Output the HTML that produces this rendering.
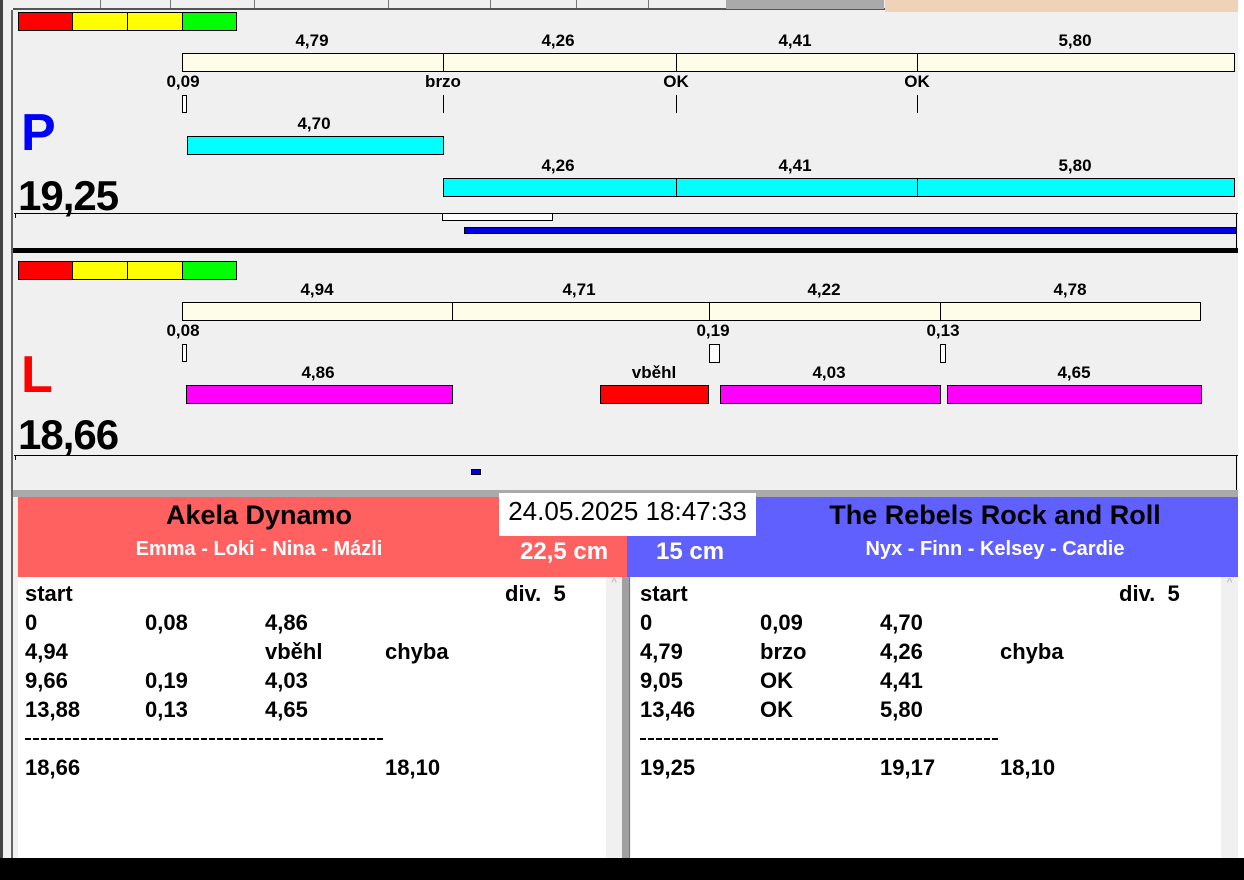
<!DOCTYPE html>
<html><head><meta charset="utf-8"><style>
*{margin:0;padding:0;box-sizing:border-box}
body{width:1244px;height:880px;position:relative;background:#fff;overflow:hidden;font-family:"Liberation Sans",Arial,sans-serif;font-weight:bold}
div{position:absolute}
.b{border:1px solid #000}
.l{font-size:17px;color:#000;transform:translateX(-50%);white-space:nowrap;line-height:18px}
.cr{background:#fefde8}
.cy{background:#00ffff}
.mg{background:#ff00ff}
.vl{width:1px;background:#000}
.t{font-size:22px;line-height:22px;white-space:nowrap}
.dash{height:2px;width:360px;background:repeating-linear-gradient(90deg,#000 0 6px,transparent 6px 8px)}
</style></head><body>
<div style="left:0;top:0;width:1238px;height:858px;background:#f0f0f0"></div>
<div style="left:0;top:0;width:3px;height:858px;background:#444"></div>
<div style="left:11px;top:10px;width:2px;height:848px;background:#666"></div>
<div style="left:13px;top:0;width:872px;height:10px;background:#f0f0f0;border-bottom:2px solid #555"></div>
<div style="left:100px;top:0;width:1px;height:8px;background:#777"></div>
<div style="left:170px;top:0;width:1px;height:8px;background:#777"></div>
<div style="left:254px;top:0;width:1px;height:8px;background:#777"></div>
<div style="left:388px;top:0;width:1px;height:8px;background:#777"></div>
<div style="left:490px;top:0;width:1px;height:8px;background:#777"></div>
<div style="left:576px;top:0;width:1px;height:8px;background:#777"></div>
<div style="left:648px;top:0;width:1px;height:8px;background:#777"></div>
<div style="left:726px;top:0;width:158px;height:9px;background:#aaa"></div>
<div style="left:885px;top:0;width:353px;height:12px;background:#f0d2b8"></div>

<div class="b" style="left:18px;top:12px;width:55px;height:19px;background:#f00"></div>
<div class="b" style="left:72px;top:12px;width:56px;height:19px;background:#ff0"></div>
<div class="b" style="left:127px;top:12px;width:56px;height:19px;background:#ff0"></div>
<div class="b" style="left:182px;top:12px;width:55px;height:19px;background:#0f0"></div>

<div class="l" style="left:312px;top:32px">4,79</div>
<div class="l" style="left:558px;top:32px">4,26</div>
<div class="l" style="left:795px;top:32px">4,41</div>
<div class="l" style="left:1075px;top:32px">5,80</div>
<div class="b cr" style="left:182px;top:53px;width:262px;height:19px"></div>
<div class="b cr" style="left:443px;top:53px;width:234px;height:19px"></div>
<div class="b cr" style="left:676px;top:53px;width:242px;height:19px"></div>
<div class="b cr" style="left:917px;top:53px;width:318px;height:19px"></div>
<div class="l" style="left:183px;top:73px">0,09</div>
<div class="l" style="left:443px;top:73px">brzo</div>
<div class="l" style="left:676px;top:73px">OK</div>
<div class="l" style="left:917px;top:73px">OK</div>
<div class="b" style="left:182px;top:95px;width:5px;height:18px;background:#fff"></div>
<div class="vl" style="left:443px;top:95px;height:18px"></div>
<div class="vl" style="left:676px;top:95px;height:18px"></div>
<div class="vl" style="left:917px;top:95px;height:18px"></div>
<div style="left:21px;top:105px;font-size:52px;line-height:56px;color:#0000ff">P</div>
<div class="l" style="left:314px;top:115px">4,70</div>
<div class="b cy" style="left:187px;top:136px;width:257px;height:19px"></div>
<div class="l" style="left:558px;top:157px">4,26</div>
<div class="l" style="left:795px;top:157px">4,41</div>
<div class="l" style="left:1075px;top:157px">5,80</div>
<div class="b cy" style="left:443px;top:178px;width:234px;height:19px"></div>
<div class="b cy" style="left:676px;top:178px;width:242px;height:19px"></div>
<div class="b cy" style="left:917px;top:178px;width:318px;height:19px"></div>
<div style="left:18px;top:174px;font-size:42px;line-height:44px;letter-spacing:-1px">19,25</div>
<div style="left:14px;top:213px;width:1224px;height:1px;background:#000"></div>
<div class="vl" style="left:15px;top:213px;height:5px"></div>
<div class="vl" style="left:1236px;top:213px;height:35px"></div>
<div class="b" style="left:442px;top:213px;width:111px;height:8px;background:#fff"></div>
<div class="b" style="left:464px;top:227px;width:773px;height:7px;background:#0000e0"></div>
<div style="left:13px;top:248px;width:1225px;height:5px;background:#000"></div>

<div class="b" style="left:18px;top:261px;width:55px;height:19px;background:#f00"></div>
<div class="b" style="left:72px;top:261px;width:56px;height:19px;background:#ff0"></div>
<div class="b" style="left:127px;top:261px;width:56px;height:19px;background:#ff0"></div>
<div class="b" style="left:182px;top:261px;width:55px;height:19px;background:#0f0"></div>
<div class="l" style="left:317px;top:281px">4,94</div>
<div class="l" style="left:579px;top:281px">4,71</div>
<div class="l" style="left:824px;top:281px">4,22</div>
<div class="l" style="left:1070px;top:281px">4,78</div>
<div class="b cr" style="left:182px;top:302px;width:271px;height:19px"></div>
<div class="b cr" style="left:452px;top:302px;width:258px;height:19px"></div>
<div class="b cr" style="left:709px;top:302px;width:232px;height:19px"></div>
<div class="b cr" style="left:940px;top:302px;width:261px;height:19px"></div>
<div class="l" style="left:183px;top:322px">0,08</div>
<div class="l" style="left:713px;top:322px">0,19</div>
<div class="l" style="left:943px;top:322px">0,13</div>
<div class="b" style="left:182px;top:344px;width:5px;height:18px;background:#fff"></div>
<div class="b" style="left:709px;top:344px;width:11px;height:19px;background:#fff"></div>
<div class="b" style="left:940px;top:344px;width:6px;height:19px;background:#fff"></div>
<div style="left:21px;top:347px;font-size:52px;line-height:56px;color:#ff0000">L</div>
<div class="l" style="left:318px;top:364px">4,86</div>
<div class="l" style="left:654px;top:364px">vběhl</div>
<div class="l" style="left:829px;top:364px">4,03</div>
<div class="l" style="left:1074px;top:364px">4,65</div>
<div class="b mg" style="left:186px;top:385px;width:267px;height:19px"></div>
<div class="b" style="left:600px;top:385px;width:109px;height:19px;background:#f00"></div>
<div class="b mg" style="left:720px;top:385px;width:221px;height:19px"></div>
<div class="b mg" style="left:947px;top:385px;width:255px;height:19px"></div>
<div style="left:18px;top:413px;font-size:42px;line-height:44px;letter-spacing:-1px">18,66</div>
<div style="left:14px;top:455px;width:1224px;height:1px;background:#000"></div>
<div class="vl" style="left:15px;top:455px;height:5px"></div>
<div class="vl" style="left:1236px;top:455px;height:35px"></div>
<div style="left:471px;top:469px;width:10px;height:6px;background:#0000e0;border:1px solid #000"></div>
<div style="left:13px;top:490px;width:1225px;height:7px;background:#aaa"></div>

<div style="left:18px;top:497px;width:609px;height:80px;background:#ff6060"></div>
<div style="left:627px;top:497px;width:611px;height:80px;background:#6060ff"></div>
<div style="left:499px;top:493px;width:257px;height:43px;background:#fff;font-weight:normal;font-size:26px;line-height:36px;text-align:center;white-space:nowrap">24.05.2025 18:47:33</div>
<div style="left:259px;top:499px;font-size:27px;line-height:32px;transform:translateX(-50%);white-space:nowrap">Akela Dynamo</div>
<div style="left:259px;top:537px;font-size:20px;line-height:24px;color:#fff;transform:translateX(-50%);white-space:nowrap">Emma - Loki - Nina - Mázli</div>
<div style="left:520px;top:538px;font-size:24px;line-height:28px;color:#fff;white-space:nowrap">22,5 cm</div>
<div style="left:656px;top:538px;font-size:24px;line-height:28px;color:#fff;white-space:nowrap">15 cm</div>
<div style="left:995px;top:499px;font-size:27px;line-height:32px;transform:translateX(-50%);white-space:nowrap">The Rebels Rock and Roll</div>
<div style="left:995px;top:537px;font-size:20px;line-height:24px;color:#fff;transform:translateX(-50%);white-space:nowrap">Nyx - Finn - Kelsey - Cardie</div>

<div style="left:18px;top:577px;width:588px;height:281px;background:#fff"></div>
<div style="left:606px;top:577px;width:16px;height:281px;background:#f0f0f0;color:#bbb;font-size:10px;text-align:center">^</div>
<div style="left:622px;top:577px;width:8px;height:281px;background:#a0a0a0;border-right:1px solid #777"></div>
<div style="left:631px;top:577px;width:590px;height:281px;background:#fff"></div>
<div style="left:1221px;top:577px;width:17px;height:281px;background:#f0f0f0;color:#bbb;font-size:10px;text-align:center">^</div>

<div class="t" style="left:25px;top:583px">start</div><div class="t" style="left:505px;top:583px">div.&nbsp; 5</div>
<div class="t" style="left:25px;top:612px">0</div><div class="t" style="left:145px;top:612px">0,08</div><div class="t" style="left:265px;top:612px">4,86</div>
<div class="t" style="left:25px;top:641px">4,94</div><div class="t" style="left:265px;top:641px">vběhl</div><div class="t" style="left:385px;top:641px">chyba</div>
<div class="t" style="left:25px;top:670px">9,66</div><div class="t" style="left:145px;top:670px">0,19</div><div class="t" style="left:265px;top:670px">4,03</div>
<div class="t" style="left:25px;top:699px">13,88</div><div class="t" style="left:145px;top:699px">0,13</div><div class="t" style="left:265px;top:699px">4,65</div>
<div class="dash" style="left:25px;top:738px"></div>
<div class="t" style="left:25px;top:757px">18,66</div><div class="t" style="left:385px;top:757px">18,10</div>

<div class="t" style="left:640px;top:583px">start</div><div class="t" style="left:1119px;top:583px">div.&nbsp; 5</div>
<div class="t" style="left:640px;top:612px">0</div><div class="t" style="left:760px;top:612px">0,09</div><div class="t" style="left:880px;top:612px">4,70</div>
<div class="t" style="left:640px;top:641px">4,79</div><div class="t" style="left:760px;top:641px">brzo</div><div class="t" style="left:880px;top:641px">4,26</div><div class="t" style="left:1000px;top:641px">chyba</div>
<div class="t" style="left:640px;top:670px">9,05</div><div class="t" style="left:760px;top:670px">OK</div><div class="t" style="left:880px;top:670px">4,41</div>
<div class="t" style="left:640px;top:699px">13,46</div><div class="t" style="left:760px;top:699px">OK</div><div class="t" style="left:880px;top:699px">5,80</div>
<div class="dash" style="left:640px;top:738px"></div>
<div class="t" style="left:640px;top:757px">19,25</div><div class="t" style="left:880px;top:757px">19,17</div><div class="t" style="left:1000px;top:757px">18,10</div>

<div style="left:0;top:858px;width:1244px;height:22px;background:#000"></div>
</body></html>
